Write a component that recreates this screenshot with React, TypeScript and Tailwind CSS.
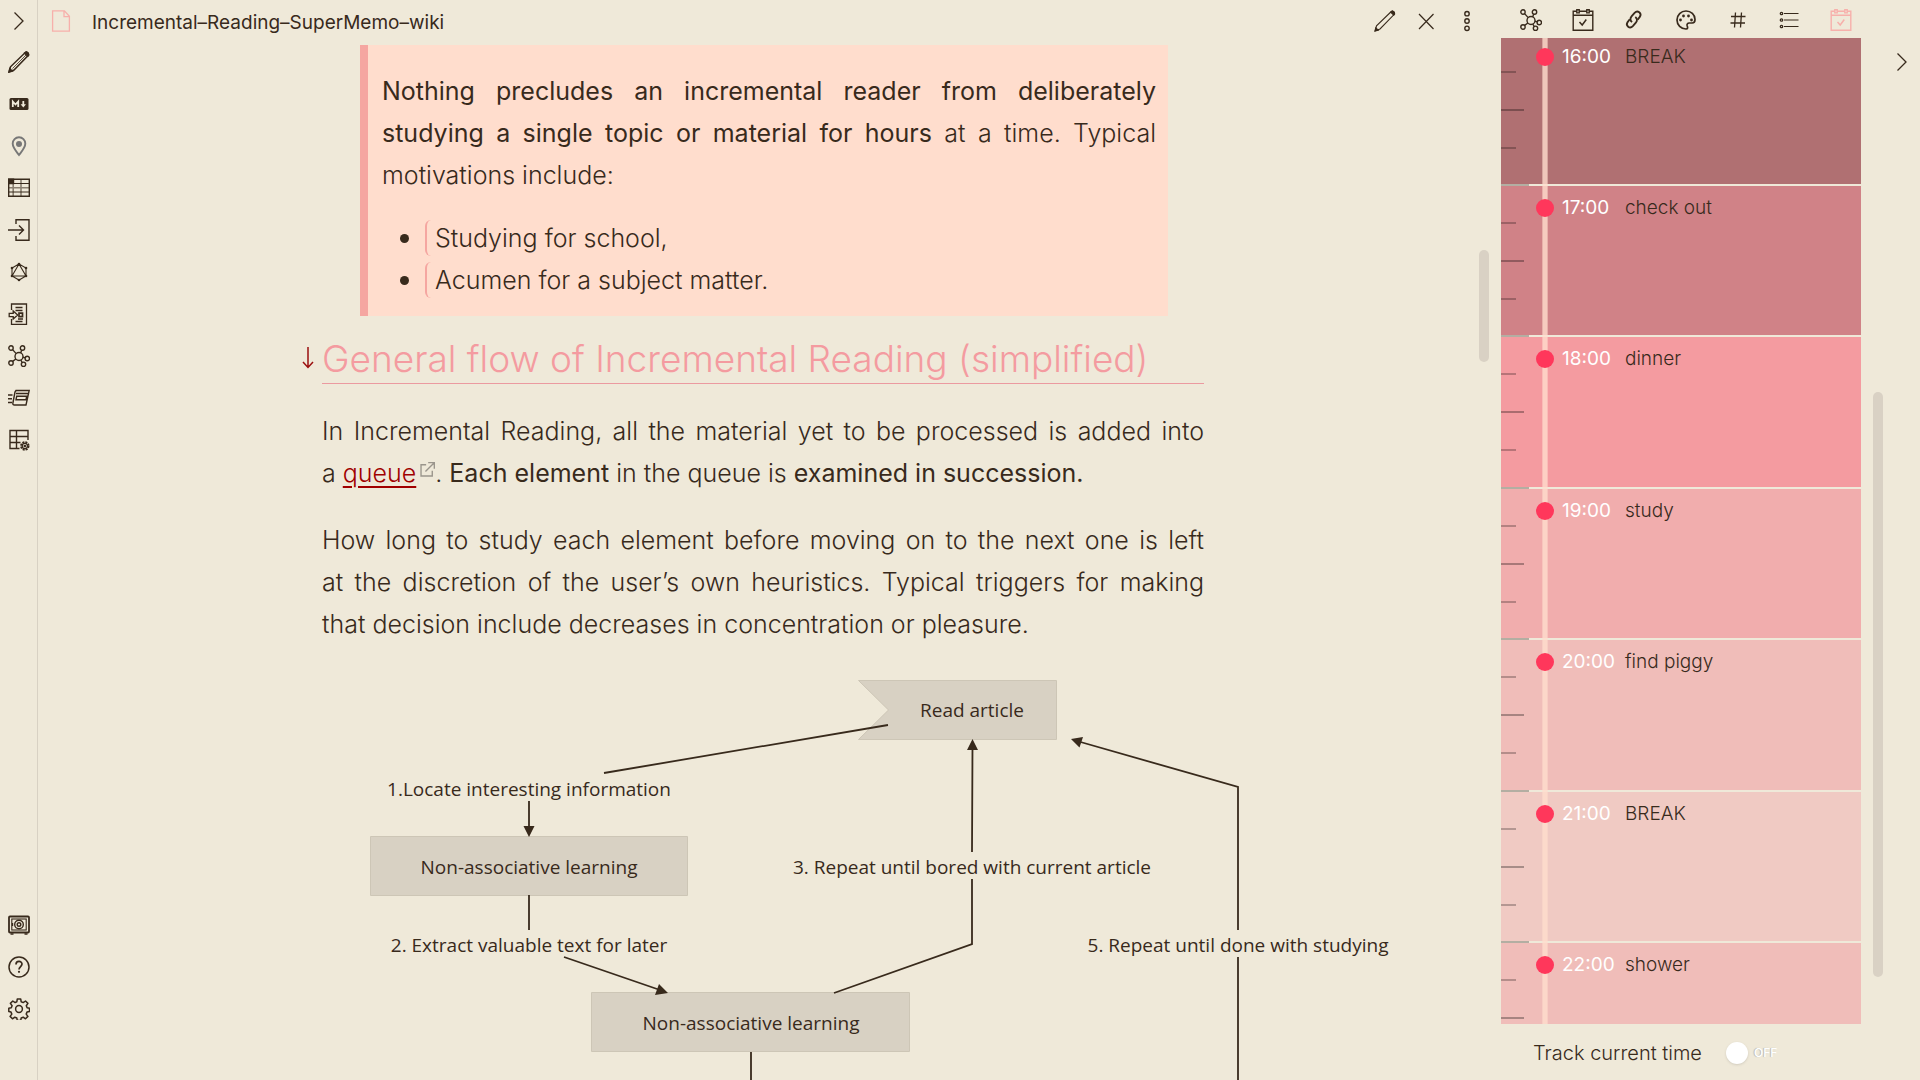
import React from "react";

function Svg({ children, className = "size-[22px]", sw = 1.4 }: { children: React.ReactNode; className?: string; sw?: number }) {
  return (
    <svg viewBox="0 0 22 22" className={className} fill="none" stroke="currentColor" strokeWidth={sw} aria-hidden="true">
      {children}
    </svg>
  );
}

const ChevronIcon = () => (
  <Svg sw={1.3}>
    <path d="M6.500 2.500 15 11l-8.500 8.500" />
  </Svg>
);
const PencilIcon = ({ bold = false }: { bold?: boolean }) => (
  <Svg sw={bold ? 1.5 : 1.1}>
    <path d="m1.200 20.800 1.300-5L17.300 1.500q1.200-.9 2.400.2t.6 2.600L6 19z" />
    <path d="m1 21 .8-3.300 2.500 2.400zM16.600 2.200l3.200 3 .9-1.200-.6-2-1.800-1z" fill="currentColor" />
    {bold && <path d="M4.500 17.500 18 4" strokeWidth=".8" />}
  </Svg>
);
const MarkdownIcon = () => (
  <Svg>
    <rect x="1.500" y="5" width="19" height="12" rx="1.500" fill="currentColor" stroke="none" />
    <path d="M4.800 14V8.500l2.700 3 2.700-3V14M15.300 8v4" stroke="#efe9d9" strokeWidth="1.800" />
    <path d="M12.600 11.300h5.400l-2.700 3.200z" fill="#efe9d9" stroke="none" />
  </Svg>
);
const PinIcon = () => (
  <Svg sw={1.9}>
    <g className="text-[#777777]" stroke="currentColor">
      <path d="M11 20C8 16 4.700 12.800 4.700 8.600a6.300 6.300 0 0 1 12.600 0C17.300 12.800 14 16 11 20z" />
      <circle cx="11" cy="9" r="3" fill="#777777" stroke="none" />
    </g>
  </Svg>
);
const TableIcon = () => (
  <Svg>
    <path d="M.7 2.200h20.600v17H.7z" />
    <path d="M.7 6.500h20.600M.7 15h20.600" strokeWidth="1.200" />
    <path d="M.7 10.700h20.600M5.200 2.200v17M13 2.200v17" strokeWidth="1.600" opacity=".55" />
    <path d="M.7 2.200h4.800v4.300H.7z" fill="currentColor" />
  </Svg>
);
const ImportIcon = () => (
  <Svg>
    <path d="M8 5V.8h13v20.400H8V17M0 11h15M11 6.500l4.500 4.500-4.500 4.500" />
  </Svg>
);
const HexagonIcon = () => (
  <Svg sw={1.1}>
    <path d="M11 3l7 4v8l-7 4-7-4V7zM11 3l7 12H4z" />
    {[[11, 3], [18, 7], [18, 15], [11, 19], [4, 15], [4, 7]].map(([x, y]) => (
      <circle key={`${x}-${y}`} cx={x} cy={y} r="1.300" fill="currentColor" stroke="none" />
    ))}
  </Svg>
);
const DocImportIcon = () => (
  <Svg sw={1.3}>
    <path d="M3.500 7V1h15v20.500h-15V16M7.500 4.500h7M7.500 7.500h7M10 16h5M7.500 18.500h7" />
    <path d="M1.200 10.300h4V8l4.500 4-4.500 4v-2.300h-4z" />
    <path d="M11 10.200h3.500v3.500H11z" strokeWidth="1.700" />
  </Svg>
);
const GraphIcon = () => (
  <Svg sw={1.4}>
    <circle cx="11" cy="11.500" r="4" />
    <circle cx="3" cy="3" r="2.200" />
    <circle cx="14.500" cy="3" r="2.200" />
    <circle cx="19.300" cy="13.500" r="2.200" />
    <circle cx="3" cy="18" r="2.200" />
    <circle cx="15.500" cy="19.300" r="2.200" />
    <path d="m4.600 4.600 3.600 4M13.700 5.200l-1 2.500M15 12.300l2.400.6M4.600 16.400l3.300-2.400M12.800 15.200l1.400 2.300" />
  </Svg>
);
const CardsIcon = () => (
  <Svg>
    <path d="M7.500 3.500h13.700L18 18H6.500q-2 0-1.600-2L7 5q.4-1.500 2-1.500M8 6.500h12.500M8.700 9.300h10l-.7 3.400H8z" />
    <path d="M0 8h4.500M0 11.800h4M0 15.500h4" />
  </Svg>
);
const GridGearIcon = () => (
  <Svg>
    <path d="M20 11V1.500H2v18h9.500M2 7.500h18M2 13.500h10.500M8.500 1.500v18" />
    <circle cx="16.800" cy="17" r="3.800" strokeWidth="1.800" strokeDasharray="2 1" />
    <circle cx="16.800" cy="17" r="2.600" strokeWidth="1.200" />
    <circle cx="16.800" cy="17" r=".6" fill="currentColor" />
  </Svg>
);
const VaultIcon = () => (
  <Svg>
    <rect x="1" y="2.500" width="20" height="16" rx="1" strokeWidth="1.800" />
    <rect x="3.800" y="5" width="14.400" height="11" strokeWidth="1.100" />
    <circle cx="11" cy="10.500" r="4.300" />
    <circle cx="11" cy="10.500" r="1.800" />
    <path d="M2.500 20h3M16.500 20h3M4.500 9v3" />
  </Svg>
);
const HelpIcon = () => (
  <Svg sw={1.5}>
    <circle cx="11" cy="11" r="10" />
    <path d="M8 8.500c0-4 6-4 6-.4 0 2.400-3 2.500-3 5.400" strokeWidth="1.700" />
    <circle cx="11" cy="15.800" r="1.100" fill="currentColor" stroke="none" />
  </Svg>
);
const GearIcon = () => (
  <Svg sw={1.5}>
    <circle cx="11" cy="11" r="3.400" />
    <path d="M9.300 1h3.400l.5 2.800 2 .8 2.300-1.600 2.400 2.400-1.600 2.300.8 2 2.400.5v3.400l-2.500.5-.8 2 1.700 2.300-2.400 2.400-2.300-1.600-2 .8-.5 2.500H9.300l-.5-2.500-2-.8-2.300 1.600-2.400-2.400 1.700-2.300-.8-2L.8 13.600v-3.400L3.300 9.700l.8-2-1.700-2.300L4.800 3l2.300 1.600 1.700-.8z" strokeLinejoin="round" />
  </Svg>
);
const FileIcon = () => (
  <Svg sw={1.3}>
    <path d="M2.600.8h11.800l5 5.400v15H2.600zM14 1v5.600h5.300" />
  </Svg>
);
const CloseIcon = () => (
  <Svg sw={1.2}>
    <path d="M4 4l14.500 15M18.500 4 4 19" />
  </Svg>
);
const DotsIcon = () => (
  <Svg sw={1.4}>
    <circle cx="11" cy="3.700" r="2.200" />
    <circle cx="11" cy="11" r="2.200" />
    <circle cx="11" cy="18.300" r="2.200" />
  </Svg>
);
const CalendarIcon = () => (
  <Svg sw={1.4}>
    <path d="M4.500 2.200H1.200v19h19.600v-19h-3.300M7.500 2.200h7M1.200 6.300h19.600M4.800.7h2.400v3.200H4.800zM14.800.7h2.400v3.200h-2.400z" />
    <path d="m7.500 13 2.700 3L14.300 10.500" strokeWidth="1.500" />
  </Svg>
);
const LinkIcon = () => (
  <Svg sw={2.3}>
    <g transform="translate(1.500 1.500) scale(.8)">
      <path d="M9.500 14.500c-2.600-1.900-2.700-4.900-.7-7.200L12.600 3c3.800-4 9.600.4 6.500 5l-2.700 3.600" />
      <path d="M13.500 8c2.600 1.900 2.700 4.900.7 7.200l-3.800 4.300c-3.800 4-9.600-.4-6.500-5l2.700-3.600" />
    </g>
  </Svg>
);
const PaletteIcon = () => (
  <Svg sw={1.7}>
    <path d="M11 2a9 9 0 1 0 0 18c2 0 1.800-1.700 1.200-3-.6-1.700.3-3 2-3h3c2 0 2.800-1.500 2.800-3.500C20 5.500 16 2 11 2z" />
    {[[5.5, 11], [8.5, 7], [13.5, 7], [16.5, 11]].map(([x, y]) => (
      <circle key={`${x}-${y}`} cx={x} cy={y} r="1.400" fill="currentColor" stroke="none" />
    ))}
  </Svg>
);
const HashIcon = () => (
  <Svg sw={1.3}>
    <path d="M8.500 3.500 7.500 18.500M14.500 3.500l-1 15M4 7.500h14.500M3.500 14H18" />
  </Svg>
);
const ListIcon = () => (
  <Svg sw={1.1}>
    <path d="M6 4.500h14.500M6 11h14.500M6 17.500h14.500" />
    <g strokeWidth="1.300">
      <circle cx="3.500" cy="4.500" r="1.200" />
      <circle cx="3.500" cy="11" r="1.200" />
      <circle cx="3.500" cy="17.500" r="1.200" />
    </g>
  </Svg>
);
const ExternalIcon = () => (
  <Svg className="mb-3 ml-1 inline size-[15px]" sw={2}>
    <g className="text-[#9a958c]" stroke="#9a958c">
      <path d="M9 4H1.500v16.500H18V13M12 1h9v9M20.500 1.500 8 14" />
    </g>
  </Svg>
);

function IconButton({ label, children, className = "" }: { label: string; children: React.ReactNode; className?: string }) {
  return (
    <button type="button" aria-label={label} className={`flex shrink-0 items-center justify-center ${className}`}>
      {children}
    </button>
  );
}

const dockTop: [string, React.ReactNode][] = [
  ["Edit", <PencilIcon bold />],
  ["Markdown", <MarkdownIcon />],
  ["Location", <PinIcon />],
  ["Table", <TableIcon />],
  ["Import", <ImportIcon />],
  ["Network", <HexagonIcon />],
  ["Import document", <DocImportIcon />],
  ["Graph view", <GraphIcon />],
  ["Flashcards", <CardsIcon />],
  ["Table settings", <GridGearIcon />],
];
const dockBottom: [string, React.ReactNode][] = [
  ["Open vault", <VaultIcon />],
  ["Help", <HelpIcon />],
  ["Settings", <GearIcon />],
];

function Dock() {
  return (
    <nav className="flex w-[38px] shrink-0 flex-col justify-between border-r border-[#d8d1c3] pb-[50px]">
      <div className="flex flex-col">
        <IconButton label="Expand sidebar" className="h-[41px] w-full"><ChevronIcon /></IconButton>
        {dockTop.map(([label, icon]) => (
          <IconButton key={label} label={label} className="h-[42px] w-full">{icon}</IconButton>
        ))}
      </div>
      <div className="flex flex-col">
        {dockBottom.map(([label, icon]) => (
          <IconButton key={label} label={label} className="h-[42px] w-full">{icon}</IconButton>
        ))}
      </div>
    </nav>
  );
}

function Label({ x, y, children }: { x: number; y: number; children: string }) {
  return <text x={x} y={y} textAnchor="middle" fill="#382a1c" className="font-['Open_Sans',sans-serif] text-[19px] font-normal">{children}</text>;
}

function FlowDiagram() {
  return (
    <svg viewBox="322 675 1080 410" className="mt-[30px] h-[410px] w-[1080px] max-w-none" role="img" aria-label="General flow of incremental reading">
      <g fill="#d8d1c3" stroke="#cdc6b6">
        <path d="M858.500 680.500h198v59h-198l30-29.500z" />
        <path d="M370.500 836.500h317v59h-317zM591.500 992.500h318v59h-318z" />
      </g>
      <g fill="none" stroke="#382a1c" strokeWidth="1.800">
        <path d="M888 725 604 773M529 801v30M529 895v35M564 957l96 33M751 1052v40" />
        <path d="M834 993l138-49v-65M972 852l.5-105M1077 741l161 46v143M1238 957v140" />
      </g>
      <g fill="#382a1c">
        <path d="M523.500 826h11l-5.500 11zM668 993l-13 2 4-11zM972.500 739l-5.500 11h11zM1071 739l12-2-3.500 10.500z" />
      </g>
      <Label x={972} y={717}>Read article</Label>
      <Label x={529} y={796}>1.Locate interesting information</Label>
      <Label x={529} y={874}>Non-associative learning</Label>
      <Label x={972} y={874}>3. Repeat until bored with current article</Label>
      <Label x={529} y={952}>2. Extract valuable text for later</Label>
      <Label x={1238} y={952}>5. Repeat until done with studying</Label>
      <Label x={751} y={1030}>Non-associative learning</Label>
    </svg>
  );
}

function Note() {
  return (
    <main className="relative min-h-0 flex-1 overflow-hidden pr-px">
      <article className="mx-auto w-[882px] text-[25px] leading-[42px] font-light">
        <blockquote className="mr-[36px] ml-[38px] border-l-8 border-[#f5a6a1] bg-[#ffddcd] pt-[25px] pr-[12px] pb-[15px] pl-[14px]">
          <p className="text-justify">
            <b className="font-normal">Nothing precludes an incremental reader from deliberately studying a single topic or material for hours</b> at a time. Typical motivations include:
          </p>
          <ul className="mt-[21px]">
            {["Studying for school,", "Acumen for a subject matter."].map((item) => (
              <li key={item} className="flex items-center pl-[18px]">
                <span className="mr-[16px] size-[9px] rounded-full bg-[#382a1c]" />
                <span className="h-9 w-2 rounded-l-md border-l-2 border-[#f5a6a1]" />
                <span className="pl-[2px]">{item}</span>
              </li>
            ))}
          </ul>
        </blockquote>
        <h2 className="relative mt-[18px] border-b border-[#eb9aa0] text-[37px] leading-[49px] text-[#f49ba0]">
          <svg viewBox="0 0 12 22" className="absolute top-[13px] -left-5 h-[22px] w-3" fill="none" stroke="#9b0f0f" strokeWidth="1.500" aria-hidden="true">
            <path d="M6 0v20M1 15l5 5.500 5-5.500" />
          </svg>
          General flow of Incremental Reading (simplified)
        </h2>
        <p className="mt-[26px] text-justify">
          In Incremental Reading, all the material yet to be processed is added into a{"\u00a0"}
          <a href="#queue" className="text-[#a00000] underline decoration-2 underline-offset-4">queue</a>
          <ExternalIcon />. <b className="font-normal">Each element</b> in the queue is <b className="font-normal">examined in succession.</b>
        </p>
        <p className="mt-[25px] text-justify">
          How long to study each element before moving on to the next one is left at{"\u00a0"}the discretion of the user’s own heuristics. Typical triggers for making that decision include decreases in concentration or pleasure.
        </p>
        <FlowDiagram />
      </article>
      <div className="absolute top-[205px] right-0 h-[112px] w-[10px] rounded-full bg-[#d9d1c4]" />
    </main>
  );
}

const hours = [
  { time: "16:00", name: "BREAK", color: "bg-[#b07072]" },
  { time: "17:00", name: "check out", color: "bg-[#d08287]" },
  { time: "18:00", name: "dinner", color: "bg-[#f49ba0]" },
  { time: "19:00", name: "study", color: "bg-[#f1adad]" },
  { time: "20:00", name: "find piggy", color: "bg-[#f0bdb9]" },
  { time: "21:00", name: "BREAK", color: "bg-[#f0cac3]" },
  { time: "22:00", name: "shower", color: "bg-[#f0bdb9]" },
];

function Timeline() {
  return (
    <ol className="relative grid min-h-0 flex-1 grid-rows-[1460fr_1514fr_1514fr_1514fr_1514fr_1514fr_830fr]">
      <div className="absolute inset-y-0 left-[41px] z-10 w-[6px] border-x border-[#ffddcd]/50 bg-[#ffddcd]/80 bg-clip-padding" />
      {hours.map((h, i) => (
        <li key={h.time} className={`flex min-h-0 flex-col overflow-hidden ${i === 0 ? "justify-end" : ""} ${h.color}`}>
          <div className="relative h-[151px] shrink-0 border-t-2 border-[#efe9d9]">
            <div className="absolute -top-[2px] left-0 flex flex-col gap-9">
              <i className="h-[2px] w-7 bg-black/25" />
              <i className="h-[2px] w-[15px] bg-black/25" />
              <i className="h-[2px] w-[23px] bg-black/30" />
              <i className="h-[2px] w-[15px] bg-black/25" />
            </div>
            <div className="relative z-20 flex items-center pt-[7px] pl-[35px] text-[19px] leading-[30px]">
              <span className="size-[18px] rounded-full bg-[#ff375b]" />
              <time className="ml-[8px] w-[63px] text-white">{h.time}</time>
              <span className="font-light">{h.name}</span>
            </div>
          </div>
        </li>
      ))}
    </ol>
  );
}

const tabs: [string, React.ReactNode][] = [
  ["Graph", <GraphIcon />],
  ["Calendar", <CalendarIcon />],
  ["Links", <LinkIcon />],
  ["Palette", <PaletteIcon />],
  ["Tags", <HashIcon />],
  ["Outline", <ListIcon />],
  ["Day planner", <CalendarIcon />],
];

export default function App() {
  return (
    <div className="flex h-screen overflow-hidden bg-[#efe9d9] font-[Inter,sans-serif] text-[#382a1c]">
      <Dock />
      <section className="flex min-w-0 flex-1 flex-col">
        <header className="flex h-[45px] shrink-0 items-center pr-[11px] pl-[12px]">
          <span className="pb-1 text-[#f7b0ab]"><FileIcon /></span>
          <h1 className="ml-5 flex-1 pt-[2px] text-[19px]">Incremental–Reading–SuperMemo–wiki</h1>
          <div className="flex gap-[19px] pb-[3px]">
            <IconButton label="Edit note"><PencilIcon /></IconButton>
            <IconButton label="Close"><CloseIcon /></IconButton>
            <IconButton label="More options"><DotsIcon /></IconButton>
          </div>
        </header>
        <Note />
      </section>
      <aside className="flex w-[431px] shrink-0 pl-3">
        <div className="flex w-[360px] flex-col">
          <div className="flex h-[38px] shrink-0 items-center justify-between pt-[2px] pr-[9px] pl-[19px]">
            {tabs.map(([label, icon], i) => (
              <IconButton key={label} label={label} className={i === 6 ? "text-[#f7b0ab]" : ""}>{icon}</IconButton>
            ))}
          </div>
          <Timeline />
          <label className="flex h-[56px] shrink-0 items-center pt-px pl-8 text-xl font-light">
            Track current time
            <input type="checkbox" className="ml-6 size-[22px] appearance-none rounded-full bg-white shadow" />
            <span className="ml-[6px] text-xs font-medium text-white [text-shadow:-1px_0_1px_#b8b2a4]">OFF</span>
          </label>
        </div>
        <div className="mt-[392px] ml-3 h-[585px] w-[10px] rounded-full bg-[#d9d1c4]" />
        <IconButton label="Collapse sidebar" className="mt-[51px] ml-[8px] h-[22px]"><ChevronIcon /></IconButton>
      </aside>
    </div>
  );
}
